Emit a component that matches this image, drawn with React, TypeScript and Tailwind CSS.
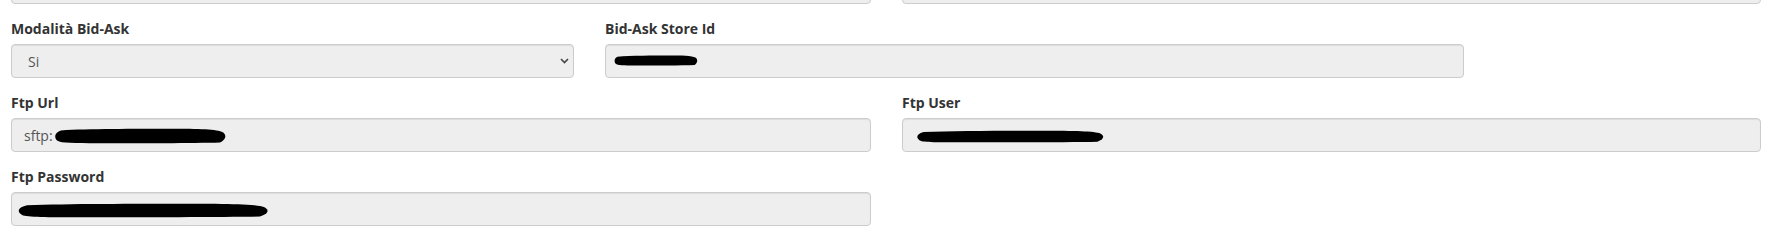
import type { ReactNode } from "react";

const font = { fontFamily: '"Open Sans", "Liberation Sans", sans-serif' };

function Scribble({ w, h }: { w: number; h: number }) {
  // hand-drawn redaction marker
  return (
    <svg width={w} height={h} viewBox="0 0 100 20" preserveAspectRatio="none" className="shrink-0">
      <path
        d="M4 3 C 20 1, 45 1, 70 1 C 86 1, 96 2, 98 6 C 100 10, 99 15, 96 18 C 80 19, 50 19, 25 19 C 12 19, 4 19, 2 16 C 0 12, 0 6, 4 3 Z"
        fill="#000"
      />
    </svg>
  );
}

function Box({ children, className = "" }: { children?: ReactNode; className?: string }) {
  return (
    <div
      className={`flex h-[34px] items-center rounded-[4px] border border-[#cccccc] bg-[#eeeeee] px-3 text-[14px] text-[#555555] shadow-[inset_0_1px_1px_rgba(0,0,0,0.075)] ${className}`}
    >
      {children}
    </div>
  );
}

function Field({ label, width, children }: { label: string; width: string; children?: ReactNode }) {
  return (
    <div className={`mb-[15px] ${width}`}>
      <label className="mb-[5px] block text-[14px] leading-[20px] font-bold text-[#333333]">{label}</label>
      {children}
    </div>
  );
}

export default function App() {
  return (
    <div className="h-[244px] w-[1774px] overflow-hidden bg-white pl-[11px]" style={font}>
      {/* row cut off at the top of the screenshot */}
      <div className="-mt-[30px] mb-[15px] flex gap-[31px]">
        <Box className="w-[860px]" />
        <Box className="w-[859px]" />
      </div>

      <div className="flex gap-[31px]">
        <Field label="Modalità Bid-Ask" width="w-[563px]">
          <div className="relative">
            <select
              className="h-[34px] w-full appearance-none rounded-[4px] border border-[#cccccc] bg-[#eeeeee] pl-[16px] text-[14px] text-[#555555] shadow-[inset_0_1px_1px_rgba(0,0,0,0.075)] outline-none"
              defaultValue="si"
            >
              <option value="si">Si</option>
              <option value="no">No</option>
            </select>
            <svg
              className="pointer-events-none absolute top-[14px] right-[5px]"
              width="9"
              height="6"
              viewBox="0 0 9 6"
            >
              <path d="M1 1 L4.5 4.5 L8 1" fill="none" stroke="#444" strokeWidth="1.6" />
            </svg>
          </div>
        </Field>
        <Field label="Bid-Ask Store Id" width="w-[859px]">
          <Box>
            <span className="-ml-[4px] -mt-[2px]">
              <Scribble w={84} h={11} />
            </span>
          </Box>
        </Field>
      </div>

      <div className="flex gap-[31px]">
        <Field label="Ftp Url" width="w-[860px]">
          <Box>
            <span>sftp:</span>
            <span className="ml-[1px] mt-[2px]">
              <Scribble w={173} h={16} />
            </span>
          </Box>
        </Field>
        <Field label="Ftp User" width="w-[859px]">
          <Box>
            <span className="ml-[1px] mt-[2px]">
              <Scribble w={189} h={13} />
            </span>
          </Box>
        </Field>
      </div>

      <div className="flex gap-[31px]">
        <Field label="Ftp Password" width="w-[860px]">
          <Box>
            <span className="-ml-[7px] mt-[2px]">
              <Scribble w={253} h={15} />
            </span>
          </Box>
        </Field>
      </div>
    </div>
  );
}
